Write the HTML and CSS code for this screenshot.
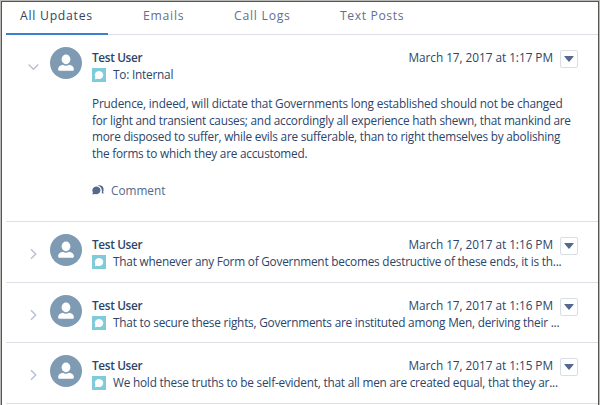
FILE: index.html
```html
<!DOCTYPE html>
<html lang="en">
  <head>
    <meta charset="utf-8" />
    <title>Case Feed</title>
    <meta name="viewport" content="width=device-width, initial-scale=1" />
    <link rel="stylesheet" href="styles.css">
  </head>
  <body>
    <svg class="sprite" aria-hidden="true">
      <symbol id="user" viewBox="0 0 32 32">
        <ellipse cx="16" cy="12.4" rx="4.4" ry="4.8" />
        <path d="M8.2 22.8v-1.3c0-2 2.3-3 4.7-3.7 1.9 1.3 4.3 1.3 6.2 0 2.4.7 4.7 1.7 4.7 3.7v1.3q0 1-1 1H9.200q-1 0-1-1z" />
      </symbol>
      <symbol id="post" viewBox="0 0 14 14">
        <path d="M7.2 2.9a4.200 4.100 0 1 1-1.700 7.900l-2.500.500.300-2.400a4.200 4.100 0 0 1 3.900-6z" />
      </symbol>
      <symbol id="down" viewBox="0 0 10 6">
        <path d="M.8 0h8.4q.8 0 .3.700L5.500 5.400q-.5.500-1 0L.5.700Q0 0 .8 0z" />
      </symbol>
      <symbol id="chevron" viewBox="0 0 7 12">
        <path d="M1 1.200 5.700 6 1 10.800" />
      </symbol>
      <symbol id="comment" viewBox="0 0 12 10">
        <path d="M4.700 1.500a4 3.900 0 1 1-1.800 7.500L.400 9.600l.500-2.300a4 3.900 0 0 1 3.800-5.800z" />
        <path d="M5.800.6C8.900-.3 11.800 1.500 11.600 4.700c0 .7-.1 1.300-.4 1.800l.4 2-1.900-.2C10.600 4.500 9 1.500 5.800.600z" />
      </symbol>
    </svg>

    <main class="feed">
      <nav class="tabs">
        <a class="tab tab-active">All Updates</a>
        <a class="tab tab-emails">Emails</a>
        <a class="tab tab-calls">Call Logs</a>
        <a class="tab tab-posts">Text Posts</a>
      </nav>

      <article class="item item-open">
        <svg class="chevron"><use href="#chevron" /></svg>
        <span class="avatar"><svg><use href="#user" /></svg></span>
        <div class="content">
          <header class="meta">
            <b class="name">Test User</b>
            <time class="date">March 17, 2017 at 1:17 PM</time>
          </header>
          <div class="summary">
            <span class="badge"><svg><use href="#post" /></svg></span>
            <span class="text">To: Internal</span>
          </div>
          <p class="post">
            Prudence, indeed, will dictate that Governments long established should not be changed<br />
            for light and transient causes; and accordingly all experience hath shewn, that mankind are<br />
            more disposed to suffer, while evils are sufferable, than to right themselves by abolishing<br />
            the forms to which they are accustomed.
          </p>
          <a class="comment"><svg><use href="#comment" /></svg>Comment</a>
        </div>
        <button class="menu"><svg><use href="#down" /></svg></button>
      </article>

      <article class="item">
        <svg class="chevron"><use href="#chevron" /></svg>
        <span class="avatar"><svg><use href="#user" /></svg></span>
        <div class="content">
          <header class="meta">
            <b class="name">Test User</b>
            <time class="date">March 17, 2017 at 1:16 PM</time>
          </header>
          <div class="summary">
            <span class="badge"><svg><use href="#post" /></svg></span>
            <span class="text">That whenever any Form of Government becomes destructive of these ends, it is th...</span>
          </div>
        </div>
        <button class="menu"><svg><use href="#down" /></svg></button>
      </article>

      <article class="item">
        <svg class="chevron"><use href="#chevron" /></svg>
        <span class="avatar"><svg><use href="#user" /></svg></span>
        <div class="content">
          <header class="meta">
            <b class="name">Test User</b>
            <time class="date">March 17, 2017 at 1:16 PM</time>
          </header>
          <div class="summary">
            <span class="badge"><svg><use href="#post" /></svg></span>
            <span class="text">That to secure these rights, Governments are instituted among Men, deriving their ...</span>
          </div>
        </div>
        <button class="menu"><svg><use href="#down" /></svg></button>
      </article>

      <article class="item">
        <svg class="chevron"><use href="#chevron" /></svg>
        <span class="avatar"><svg><use href="#user" /></svg></span>
        <div class="content">
          <header class="meta">
            <b class="name">Test User</b>
            <time class="date">March 17, 2017 at 1:15 PM</time>
          </header>
          <div class="summary">
            <span class="badge"><svg><use href="#post" /></svg></span>
            <span class="text">We hold these truths to be self-evident, that all men are created equal, that they ar...</span>
          </div>
        </div>
        <button class="menu"><svg><use href="#down" /></svg></button>
      </article>
    </main>
  </body>
</html>
```

FILE: styles.css
```css
* {
  box-sizing: border-box;
}
body {
  margin: 0;
  height: 405px;
  padding: 1px 1px 0;
  overflow: hidden;
  background: #b9b9b5;
  color: #2c4569;
  font: 11.8px/17px "Open Sans", "Noto Sans", sans-serif;
}
.sprite {
  display: none;
}
.feed {
  height: 404px;
  padding: 0 0 0 4px;
  overflow: hidden;
  border: 1px solid #555;
  border-bottom: 0;
  background: #fff;
}
.tabs {
  display: flex;
  height: 33px;
  border-bottom: 1px solid #dcdfe3;
  font-size: 12.2px;
  letter-spacing: 0.75px;
  white-space: nowrap;
  color: #5f6f90;
}
.tab {
  height: 33px;
  padding: 5px 0 0 14px;
}
.tab-active {
  width: 102px;
  border-bottom: 2px solid #3a7fd0;
  color: #2c4569;
}
.tab-emails {
  width: 105px;
  padding-left: 35px;
}
.tab-calls {
  width: 107px;
  padding-left: 21px;
}
.tab-posts {
  padding-left: 20px;
  letter-spacing: 0.6px;
}
.item {
  display: flex;
  height: 60.7px;
  padding: 13px 20px 0 22px;
  border-bottom: 1px solid #dcdfe3;
}
.item-open {
  height: 187px;
}
.chevron {
  width: 7px;
  height: 12px;
  margin: 13px 16px 0 2px;
  fill: none;
  stroke: #b9c2d3;
  stroke-width: 1.5;
}
.item-open .chevron {
  transform: rotate(90deg);
}
.avatar {
  flex: none;
  width: 32px;
  height: 32px;
  margin: -1px 10px 0 -3px;
  border-radius: 50%;
  background: #7f9ab3;
}
.avatar svg {
  display: block;
  width: 32px;
  height: 32px;
  fill: #fff;
}
.content {
  width: 461px;
  padding-top: 1px;
  white-space: nowrap;
}
.meta {
  display: flex;
  justify-content: space-between;
  height: 17px;
}
.name {
  font-weight: 600;
  letter-spacing: -0.35px;
}
.date {
  letter-spacing: -0.04px;
}
.summary {
  display: flex;
  height: 17px;
  letter-spacing: -0.21px;
}
.badge {
  width: 14px;
  height: 14px;
  margin: 2px 7px 0 0;
  background: #7fcbd9;
}
.badge svg {
  display: block;
  width: 14px;
  height: 14px;
  fill: #fff;
}
.post {
  margin: 12px 0 0;
  line-height: 16.7px;
  letter-spacing: -0.23px;
}
.post::first-line {
  letter-spacing: -0.18px;
}
.comment {
  display: flex;
  align-items: center;
  margin-top: 20px;
  color: #54698d;
}
.comment svg {
  width: 12px;
  height: 10px;
  margin-right: 7px;
  fill: #54698d;
}
.menu {
  display: grid;
  place-items: center;
  width: 18px;
  height: 18px;
  margin: 2px 0 0 7px;
  padding: 0;
  border: 1px solid #d8dde6;
  border-radius: 2px;
  background: #fff;
}
.menu svg {
  width: 10px;
  height: 6px;
  fill: #54698d;
}
```
